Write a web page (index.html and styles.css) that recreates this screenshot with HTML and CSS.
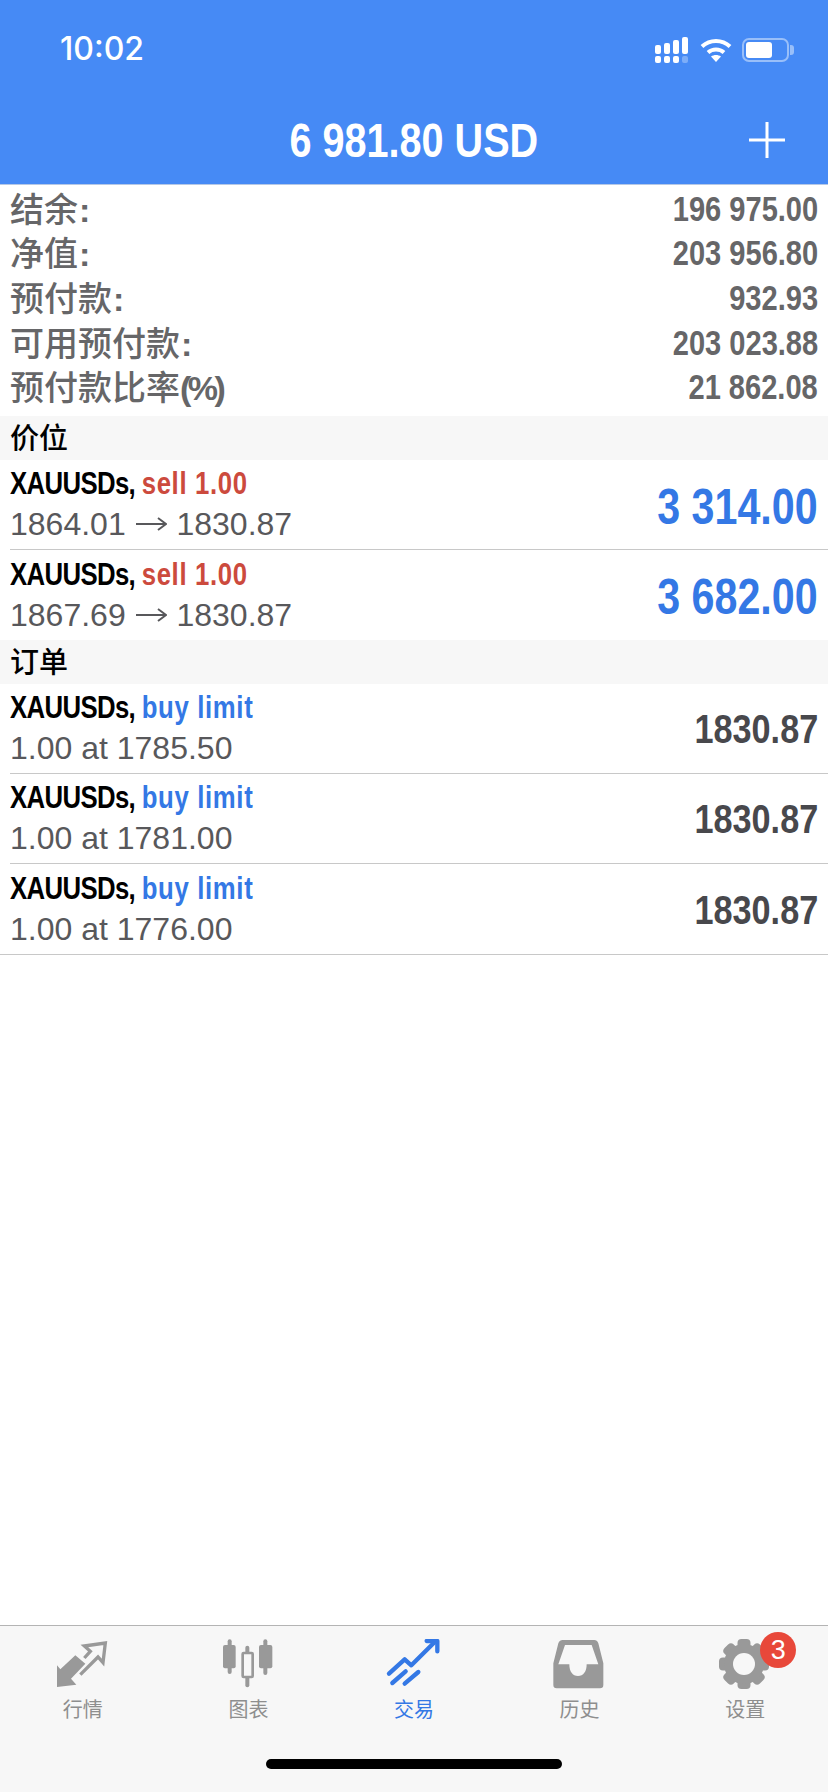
FILE: index.html
```html
<!DOCTYPE html>
<html lang="zh-CN">
<head>
    <meta charset="UTF-8">
    <meta name="viewport" content="width=device-width, initial-scale=1.0">
    <title>交易</title>
    <link rel="stylesheet" href="styles.css">
</head>
<body>
    <div class="app">
        <header class="top-bar">
            <div class="status-bar">
                <span class="clock">10:02</span>
                <div class="status-icons">
                    <svg class="signal-icon" viewBox="0 0 33 26" fill="#fff">
                        <rect x="0" y="8" width="6" height="9" rx="2"/>
                        <rect x="9" y="6" width="6" height="11" rx="2"/>
                        <rect x="18" y="3" width="6" height="14" rx="2"/>
                        <rect x="27" y="0" width="6" height="17" rx="2"/>
                        <rect x="0" y="19" width="6" height="7" rx="2"/>
                        <rect x="9" y="19" width="6" height="7" rx="2"/>
                        <rect x="18" y="19" width="6" height="7" rx="2"/>
                        <rect x="27" y="19" width="6" height="7" rx="2" opacity="0.3"/>
                    </svg>
                    <svg class="wifi-icon" viewBox="0 0 32 24" fill="none" stroke="#fff" stroke-width="4">
                        <path d="M2 8.500C10 1 22 1 30 8.500"/>
                        <path d="M8 14.500C12.500 10.500 19.500 10.500 24 14.500"/>
                        <path d="M16 24L11 18.500C14 16.500 18 16.500 21 18.500Z" fill="#fff" stroke="none"/>
                    </svg>
                    <div class="battery">
                        <div class="battery-level"></div>
                    </div>
                    <div class="battery-tip"></div>
                </div>
            </div>
            <div class="nav-bar">
                <h1 class="nav-title">6 981.80 USD</h1>
                <svg class="plus-icon" viewBox="0 0 36 36" stroke="#fff" stroke-width="3">
                    <path d="M18 0V36M0 18H36"/>
                </svg>
            </div>
        </header>

        <main class="content">
            <section class="summary">
                <div class="summary-row"><span>结余<i class="colon">:</i></span><b>196 975.00</b></div>
                <div class="summary-row"><span>净值<i class="colon">:</i></span><b>203 956.80</b></div>
                <div class="summary-row"><span>预付款<i class="colon">:</i></span><b>932.93</b></div>
                <div class="summary-row"><span>可用预付款<i class="colon">:</i></span><b>203 023.88</b></div>
                <div class="summary-row"><span>预付款比率<i class="percent">(%)</i></span><b>21 862.08</b></div>
            </section>

            <div class="section-title">价位</div>
            <div class="trade-row">
                <div class="trade-info">
                    <div class="trade-name">XAUUSDs, <span class="sell">sell 1.00</span></div>
                    <div class="trade-detail">1864.01 <svg class="arrow-icon" viewBox="0 0 31 14" fill="none" stroke="#58585b" stroke-width="2"><path d="M0 7H29M22 1L30 7L22 13"/></svg> 1830.87</div>
                </div>
                <div class="trade-value profit">3 314.00</div>
            </div>
            <div class="trade-row no-line">
                <div class="trade-info">
                    <div class="trade-name">XAUUSDs, <span class="sell">sell 1.00</span></div>
                    <div class="trade-detail">1867.69 <svg class="arrow-icon" viewBox="0 0 31 14" fill="none" stroke="#58585b" stroke-width="2"><path d="M0 7H29M22 1L30 7L22 13"/></svg> 1830.87</div>
                </div>
                <div class="trade-value profit">3 682.00</div>
            </div>

            <div class="section-title">订单</div>
            <div class="trade-row">
                <div class="trade-info">
                    <div class="trade-name">XAUUSDs, <span class="buy">buy limit</span></div>
                    <div class="trade-detail">1.00 at 1785.50</div>
                </div>
                <div class="trade-value">1830.87</div>
            </div>
            <div class="trade-row">
                <div class="trade-info">
                    <div class="trade-name">XAUUSDs, <span class="buy">buy limit</span></div>
                    <div class="trade-detail">1.00 at 1781.00</div>
                </div>
                <div class="trade-value">1830.87</div>
            </div>
            <div class="trade-row full-line">
                <div class="trade-info">
                    <div class="trade-name">XAUUSDs, <span class="buy">buy limit</span></div>
                    <div class="trade-detail">1.00 at 1776.00</div>
                </div>
                <div class="trade-value">1830.87</div>
            </div>
        </main>

        <nav class="tab-bar">
            <div class="tabs">
                <div class="tab">
                    <svg class="tab-icon" viewBox="8 21 180 150">
                        <path d="M20 100L30 112L75 70L105 95L62 140L78 158L20 165Z" fill="#999"/>
                        <path d="M102 78L120 58L102 42L165 33L158 92L143 75L90 128" fill="none" stroke="#999" stroke-width="10"/>
                    </svg>
                    <span class="tab-label">行情</span>
                </div>
                <div class="tab">
                    <svg class="tab-icon" viewBox="655 87 180 150" fill="#999">
                        <rect x="684" y="88" width="12" height="104" rx="6"/>
                        <rect x="670" y="105" width="38" height="70" rx="6"/>
                        <rect x="737" y="107" width="12" height="125" rx="6"/>
                        <rect x="729" y="129" width="30" height="72" rx="3" fill="#f7f7f7" stroke="#999" stroke-width="8"/>
                        <rect x="791" y="88" width="12" height="107" rx="6"/>
                        <rect x="778" y="105" width="40" height="70" rx="6"/>
                    </svg>
                    <span class="tab-label">图表</span>
                </div>
                <div class="tab active">
                    <svg class="tab-icon" viewBox="0 21 180 150" fill="none" stroke="#3478e5" stroke-width="13" stroke-linecap="round" stroke-linejoin="round">
                        <path d="M15 125L62 82L82 100L150 32"/>
                        <path d="M128 27H160V58"/>
                        <path d="M25 153L65 118"/>
                        <path d="M62 155L103 120"/>
                    </svg>
                    <span class="tab-label">交易</span>
                </div>
                <div class="tab">
                    <svg class="tab-icon" viewBox="407 87 180 150" fill="#999">
                        <path fill-rule="evenodd" d="M445 90H540Q548 90 552 100L567 160V225Q567 235 557 235H427Q417 235 417 225V160L432 100Q436 90 445 90ZM452 105L432 163H465C465 185 475 198 491 198C507 198 517 185 517 163H552L532 105Z"/>
                    </svg>
                    <span class="tab-label">历史</span>
                </div>
                <div class="tab">
                    <div class="gear-wrap">
                        <svg class="tab-icon" viewBox="0 0 60 50" fill="#999">
                            <rect x="22.500" y="0" width="13" height="50" rx="4" transform="rotate(0 29 25)"/>
                            <rect x="22.500" y="0" width="13" height="50" rx="4" transform="rotate(45 29 25)"/>
                            <rect x="22.500" y="0" width="13" height="50" rx="4" transform="rotate(90 29 25)"/>
                            <rect x="22.500" y="0" width="13" height="50" rx="4" transform="rotate(135 29 25)"/>
                            <circle cx="29" cy="25" r="20"/>
                            <circle cx="29" cy="25" r="11" fill="#f7f7f7"/>
                        </svg>
                        <span class="tab-badge">3</span>
                    </div>
                    <span class="tab-label">设置</span>
                </div>
            </div>
            <div class="home-bar"></div>
        </nav>
    </div>
</body>
</html>
```

FILE: styles.css
```css
* {
    box-sizing: border-box;
}

html, body {
    margin: 0;
    padding: 0;
}

body {
    background: white;
    font-family: "Liberation Sans", "Noto Sans CJK SC", sans-serif;
}

.app {
    width: 828px;
    height: 1792px;
    display: flex;
    flex-direction: column;
    overflow: hidden;
}

.top-bar {
    height: 185px;
    background-color: #468af5;
    border-bottom: 1px solid #b5c8e6;
    color: white;
}

.status-bar {
    height: 100px;
    padding: 31px 34px 0 60px;
    display: flex;
    justify-content: space-between;
    align-items: flex-start;
}

.clock {
    font-family: Inter, "Liberation Sans", sans-serif;
    font-size: 32px;
    font-weight: 500;
    line-height: 36px;
}

.status-icons {
    display: flex;
    align-items: center;
    margin-top: 6px;
}

.signal-icon {
    width: 33px;
    height: 26px;
    margin-right: 12px;
}

.wifi-icon {
    width: 32px;
    height: 24px;
    margin-right: 10px;
}

.battery {
    width: 47px;
    height: 24px;
    padding: 2px;
    border: 2px solid rgba(255, 255, 255, 0.45);
    border-radius: 7px;
}

.battery-level {
    width: 26px;
    height: 100%;
    background: white;
    border-radius: 3px;
}

.battery-tip {
    width: 4px;
    height: 10px;
    margin-left: 1px;
    background: rgba(255, 255, 255, 0.45);
    border-radius: 0 3px 3px 0;
}

.nav-bar {
    height: 84px;
    display: flex;
    justify-content: center;
    align-items: flex-start;
    position: relative;
}

.nav-title {
    margin: 0;
    margin-top: 17px;
    font-size: 48px;
    line-height: 48px;
    font-weight: 700;
    transform: scaleX(0.825);
}

.plus-icon {
    position: absolute;
    right: 43px;
    top: 22px;
    width: 36px;
    height: 36px;
}

.content {
    flex: 1;
}

.summary {
    padding: 0 10px 0 10px;
    height: 231px;
}

.summary-row {
    height: 44.6px;
    display: flex;
    justify-content: space-between;
    align-items: center;
    font-size: 34px;
    font-weight: 500;
    color: #666668;
}

.summary-row b {
    font-size: 35px;
    margin-top: 3px;
    transform: scaleX(0.83);
    transform-origin: right center;
}

.colon {
    margin-left: 1px;
    font-style: normal;
    font-weight: 700;
}

.percent {
    font-style: normal;
    font-weight: 700;
    letter-spacing: -3.5px;
}

.section-title {
    height: 44px;
    padding: 2px 0 0 10px;
    background-color: #f7f7f7;
    font-size: 29px;
    font-weight: 500;
    line-height: 42px;
    color: #000;
}

.trade-row {
    height: 90px;
    padding-right: 10px;
    margin-left: 10px;
    display: flex;
    justify-content: space-between;
    align-items: center;
    border-bottom: 1px solid #c8c8c8;
}

.trade-row.no-line {
    border-bottom: none;
}

.trade-row.full-line {
    height: 91px;
    margin-left: 0;
    padding-left: 10px;
}

.trade-name {
    font-size: 31px;
    line-height: 40px;
    margin-top: -1px;
    font-weight: 700;
    letter-spacing: -0.75px;
    color: #000;
    transform: scaleX(0.83);
    transform-origin: left center;
    white-space: nowrap;
}

.sell {
    letter-spacing: 0.8px;
    color: #cc4a3d;
}

.buy {
    letter-spacing: 0.8px;
    color: #3478e5;
}

.trade-detail {
    font-size: 32px;
    line-height: 40px;
    color: #58585b;
}

.arrow-icon {
    width: 31px;
    height: 14px;
    margin: 0 1px;
    vertical-align: 4px;
}

.trade-value {
    margin-top: 2px;
    font-size: 41px;
    font-weight: 700;
    color: #48484c;
    transform: scaleX(0.835);
    transform-origin: right center;
}

.trade-value.profit {
    margin-top: 4px;
    font-size: 50px;
    color: #3478e5;
    transform: scaleX(0.824);
}

.tab-bar {
    height: 167px;
    background-color: #f7f7f7;
    border-top: 1px solid #b4b4b4;
    display: flex;
    flex-direction: column;
}

.tabs {
    display: flex;
    padding-top: 13px;
}

.tab {
    width: 165.6px;
    display: flex;
    flex-direction: column;
    align-items: center;
}

.tab-icon {
    display: block;
    width: 60px;
    height: 50px;
}

.gear-wrap {
    position: relative;
}

.tab-badge {
    position: absolute;
    top: -7px;
    left: 45px;
    width: 36px;
    height: 36px;
    border-radius: 50%;
    background-color: #e8483a;
    color: white;
    font-size: 27px;
    line-height: 36px;
    text-align: center;
}

.tab-label {
    margin-top: 9px;
    font-size: 20px;
    line-height: 24px;
    color: #8e8e8e;
}

.tab.active .tab-label {
    color: #3478e5;
}

.home-bar {
    width: 296px;
    height: 10px;
    margin: 37px auto 0;
    background: black;
    border-radius: 5px;
}
```
